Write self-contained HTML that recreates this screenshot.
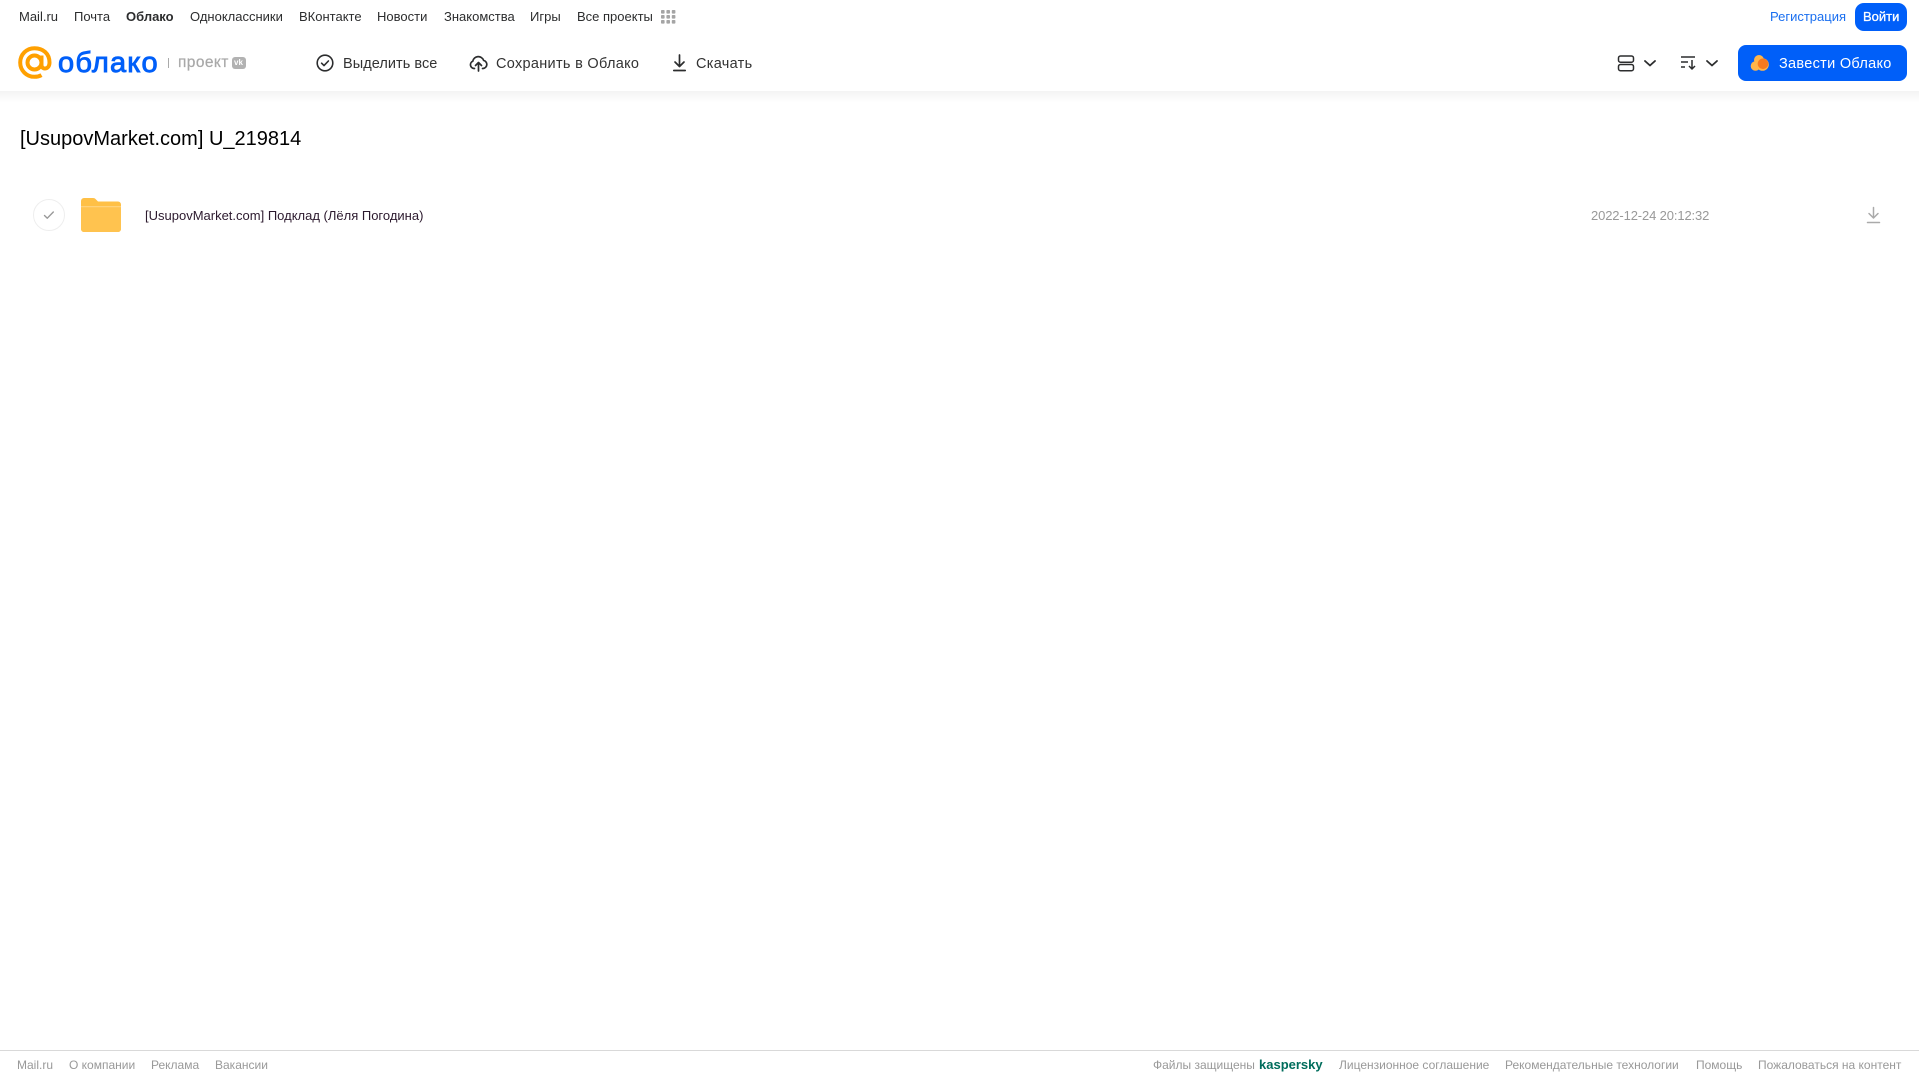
<!DOCTYPE html>
<html lang="ru"><head><meta charset="utf-8"><title>Облако</title>
<style>
html,body{margin:0;padding:0;background:#fff;width:1919px;height:1079px;overflow:hidden}
body{position:relative;font-family:"Liberation Sans","Noto Sans CJK SC",sans-serif;color:#2c2d2e}
.t{position:absolute;white-space:nowrap;line-height:20px;height:20px}
.n{top:7px;font-size:13px;color:#2c2d2e}
.b{top:53.500px;font-size:14.500px;color:#333;letter-spacing:.3px}
.f{top:1055px;font-size:12px;color:#999}
svg{position:absolute;display:block}
</style></head><body>
<div style="position:absolute;left:0;top:91px;width:1919px;height:12px;background:linear-gradient(#f3f3f3,#fff)"></div>

<span class="t n" style="left:19px">Mail.ru</span>
<span class="t n" style="left:74px">Почта</span>
<span class="t n" style="left:126px;font-weight:bold">Облако</span>
<span class="t n" style="left:190px">Одноклассники</span>
<span class="t n" style="left:299px">ВКонтакте</span>
<span class="t n" style="left:377px">Новости</span>
<span class="t n" style="left:444px">Знакомства</span>
<span class="t n" style="left:530px">Игры</span>
<span class="t n" style="left:577px">Все проекты</span>
<svg style="left:661px;top:10px" width="15" height="14" fill="#a5a5a5"><rect x="0" y="0" width="3.600" height="3.600" rx=".8"/><rect x="5.400" y="0" width="3.600" height="3.600" rx=".8"/><rect x="10.800" y="0" width="3.600" height="3.600" rx=".8"/><rect x="0" y="5" width="3.600" height="3.600" rx=".8"/><rect x="5.400" y="5" width="3.600" height="3.600" rx=".8"/><rect x="10.800" y="5" width="3.600" height="3.600" rx=".8"/><rect x="0" y="10" width="3.600" height="3.600" rx=".8"/><rect x="5.400" y="10" width="3.600" height="3.600" rx=".8"/><rect x="10.800" y="10" width="3.600" height="3.600" rx=".8"/></svg>

<span class="t n" style="left:1770px;color:#1a6ff0">Регистрация</span>
<div style="position:absolute;left:1855px;top:3px;width:52px;height:28px;background:#005ff9;border-radius:9px"></div>
<span class="t n" style="left:1863px;color:#fff;-webkit-text-stroke:.3px #fff;font-size:13px">Войти</span>

<!-- logo -->
<svg style="left:18px;top:46px" width="36" height="34" fill="none" stroke="#ffa000" stroke-width="4"><circle cx="16.500" cy="16.500" r="7"/><path d="M23.500 9.500v9.500c0 5 8 5 8-2.500C31.500 7.500 25 2.200 16.500 2.200 8.500 2.200 2.200 8.500 2.200 16.500S8.500 30.800 16.500 30.800c2.600 0 5-.6 7-1.700"/></svg>
<span class="t" style="left:58px;top:49px;height:28px;line-height:28px;font-size:29px;color:#005ff9;letter-spacing:1.200px;-webkit-text-stroke:.9px #005ff9">облако</span>
<div style="position:absolute;left:168px;top:58px;width:1px;height:10px;background:#aaa"></div>
<span class="t" style="left:178px;top:53px;font-size:15.500px;color:#a8a8a8;letter-spacing:.4px;-webkit-text-stroke:.2px #a8a8a8">проект</span>
<div style="position:absolute;left:232px;top:57px;width:14px;height:12px;background:#b2b2b2;border-radius:3px"></div>
<span class="t" style="left:234px;top:53px;font-size:8px;font-weight:bold;color:#fff">vk</span>

<!-- toolbar -->
<svg style="left:316px;top:54px" width="18" height="18" fill="none" stroke="#2c2d2e" stroke-width="1.600"><circle cx="9" cy="9" r="7.800"/><path d="M5.600 9.200l2.400 2.400 4.400-4.600" stroke-linecap="round" stroke-linejoin="round"/></svg>
<span class="t b" style="left:343px;letter-spacing:.05px">Выделить все</span>
<svg style="left:469px;top:54px" width="19" height="18" fill="none" stroke="#2c2d2e" stroke-width="1.700" stroke-linecap="round" stroke-linejoin="round"><path d="M5.500 14.500H5A3.800 3.800 0 0 1 3.800 7.200 5.600 5.600 0 0 1 14.600 6.400a4.100 4.100 0 0 1-.6 8.100h-.5"/><path d="M9.500 17V9M6.500 11.500l3-3 3 3"/></svg>
<span class="t b" style="left:496px">Сохранить в Облако</span>
<svg style="left:672px;top:54px" width="15" height="18" fill="none" stroke="#2c2d2e" stroke-width="1.700" stroke-linecap="round" stroke-linejoin="round"><path d="M7.500 1v11M3 8l4.500 4.500L12 8M1.800 16.500h11.400"/></svg>
<span class="t b" style="left:696px">Скачать</span>

<!-- right tools -->
<svg style="left:1617px;top:55px" width="18" height="17" fill="none" stroke="#2c2d2e" stroke-width="1.500"><rect x="1.500" y="1" width="15" height="6.200" rx="2"/><rect x="1.500" y="9.500" width="15" height="6.200" rx="2"/></svg>
<svg style="left:1643px;top:59px" width="14" height="9" fill="none" stroke="#2c2d2e" stroke-width="1.800" stroke-linecap="round" stroke-linejoin="round"><path d="M2 2l5 4.500L12 2"/></svg>
<svg style="left:1680px;top:55px" width="18" height="16" fill="none" stroke="#2c2d2e" stroke-width="1.400"><path d="M1 2h14M1 7h7M1 12h4"/><path d="M12 5v9M9 11l3 3 3-3" stroke-width="1.500"/></svg>
<svg style="left:1705px;top:59px" width="14" height="9" fill="none" stroke="#2c2d2e" stroke-width="1.800" stroke-linecap="round" stroke-linejoin="round"><path d="M2 2l5 4.500L12 2"/></svg>
<div style="position:absolute;left:1738px;top:45px;width:169px;height:36px;background:#005ff9;border-radius:8px"></div>
<svg style="left:1750px;top:54px" width="20" height="18"><circle cx="5.500" cy="12" r="4.800" fill="#ffb54a"/><circle cx="9" cy="6" r="5" fill="#ffb54a"/><circle cx="12.500" cy="10.500" r="6.300" fill="#ffb54a"/><circle cx="13" cy="9.800" r="5.300" fill="#f77a20"/></svg>
<span class="t" style="left:1779px;top:53.500px;font-size:14.500px;color:#fff;letter-spacing:.3px">Завести Облако</span>

<!-- content -->
<span class="t" style="left:20px;top:126.500px;height:24px;line-height:24px;font-size:20px;color:#000">[UsupovMarket.com] U_219814</span>
<div style="position:absolute;left:33px;top:199px;width:30px;height:30px;border:1px solid #eee;border-radius:50%"></div>
<svg style="left:42px;top:209px" width="14" height="12" fill="none" stroke="#999" stroke-width="1.400" stroke-linecap="round" stroke-linejoin="round"><path d="M2.500 6.500l2.800 2.700 6-6.200"/></svg>
<svg style="left:81px;top:198px" width="40" height="34"><path d="M0 3a3 3 0 0 1 3-3h9c1.500 0 2.200.6 3 1.500L17 3.500h20a3 3 0 0 1 3 3V31a3 3 0 0 1-3 3H3a3 3 0 0 1-3-3z" fill="#ffc046"/><path d="M0 9h40v22a3 3 0 0 1-3 3H3a3 3 0 0 1-3-3z" fill="#ffc34f"/><path d="M0 8h40v1.200H0z" fill="#ffd27a"/></svg>
<span class="t" style="left:145px;top:206px;font-size:13px;color:#2c1a2e">[UsupovMarket.com] Подклад (Лёля Погодина)</span>
<span class="t" style="left:1591px;top:206px;font-size:13px;color:#999;letter-spacing:-.13px">2022-12-24 20:12:32</span>
<svg style="left:1866px;top:206px" width="15" height="18" fill="none" stroke="#aaa" stroke-width="1.500" stroke-linecap="round" stroke-linejoin="round"><path d="M7.500 1.500v10M3 7.500l4.500 4.500L12 7.500M1.500 16.500h12"/></svg>

<!-- footer -->
<div style="position:absolute;left:0;top:1050px;width:1919px;height:1px;background:#d9d9d9"></div>
<span class="t f" style="left:17px">Mail.ru</span>
<span class="t f" style="left:69px">О компании</span>
<span class="t f" style="left:151px">Реклама</span>
<span class="t f" style="left:215px">Вакансии</span>
<span class="t f" style="left:1153px">Файлы защищены</span>
<span class="t f" style="left:1259px;color:#006d5c;font-weight:bold;font-size:13px">kaspersky</span>
<span class="t f" style="left:1339px">Лицензионное соглашение</span>
<span class="t f" style="left:1505px">Рекомендательные технологии</span>
<span class="t f" style="left:1696px">Помощь</span>
<span class="t f" style="left:1758px">Пожаловаться на контент</span>
</body></html>
